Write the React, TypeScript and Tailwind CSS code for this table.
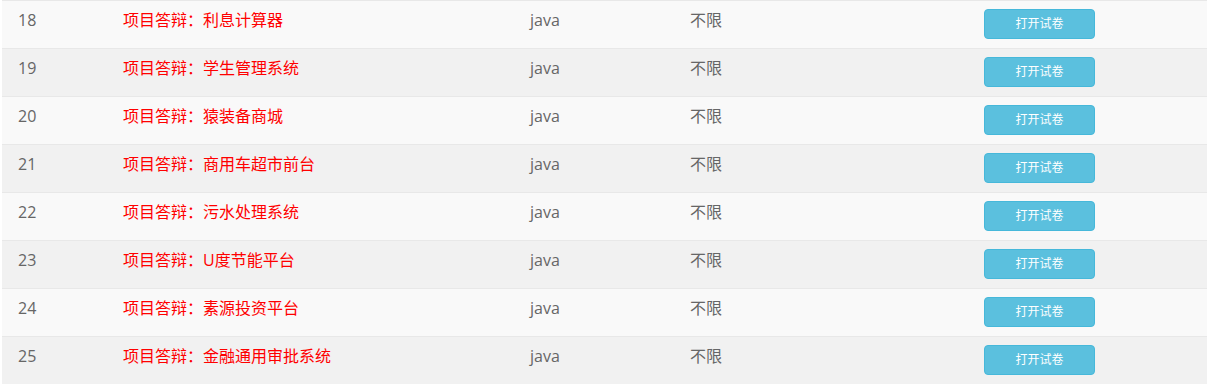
const rows = [
  { id: 18, name: "利息计算器" },
  { id: 19, name: "学生管理系统" },
  { id: 20, name: "猿装备商城" },
  { id: 21, name: "商用车超市前台" },
  { id: 22, name: "污水处理系统" },
  { id: 23, name: "U度节能平台" },
  { id: 24, name: "素源投资平台" },
  { id: 25, name: "金融通用审批系统" },
]

export default function App() {
  return (
    <div
      className="w-[1210px] h-[385px] bg-white pl-[2px] pr-[3px] text-[16px] text-[#666]"
      style={{ fontFamily: '"Open Sans", "Noto Sans CJK SC", sans-serif' }}
    >
      {rows.map((row, i) => (
        <div
          key={row.id}
          className={
            "grid grid-cols-[105px_407px_160px_295px_1fr] h-[48px] border-t border-[#e8e8e8] " +
            (i % 2 === 0 ? "bg-[#f9f9f9]" : "bg-[#f1f1f1]")
          }
        >
          <div className="pl-4 pt-[8px] leading-[23px]">{row.id}</div>
          <div className="pl-4 pt-[8px] leading-[23px] text-[#ff0000]">项目答辩：{row.name}</div>
          <div className="pl-4 pt-[8px] leading-[23px]">java</div>
          <div className="pl-4 pt-[8px] leading-[23px]">不限</div>
          <div className="pl-[15px] pt-[8px]">
            <button className="w-[111px] h-[30px] rounded-[4px] bg-[#5bc0de] border border-[#46b8da] text-white text-[12px] leading-none">
              打开试卷
            </button>
          </div>
        </div>
      ))}
    </div>
  )
}
